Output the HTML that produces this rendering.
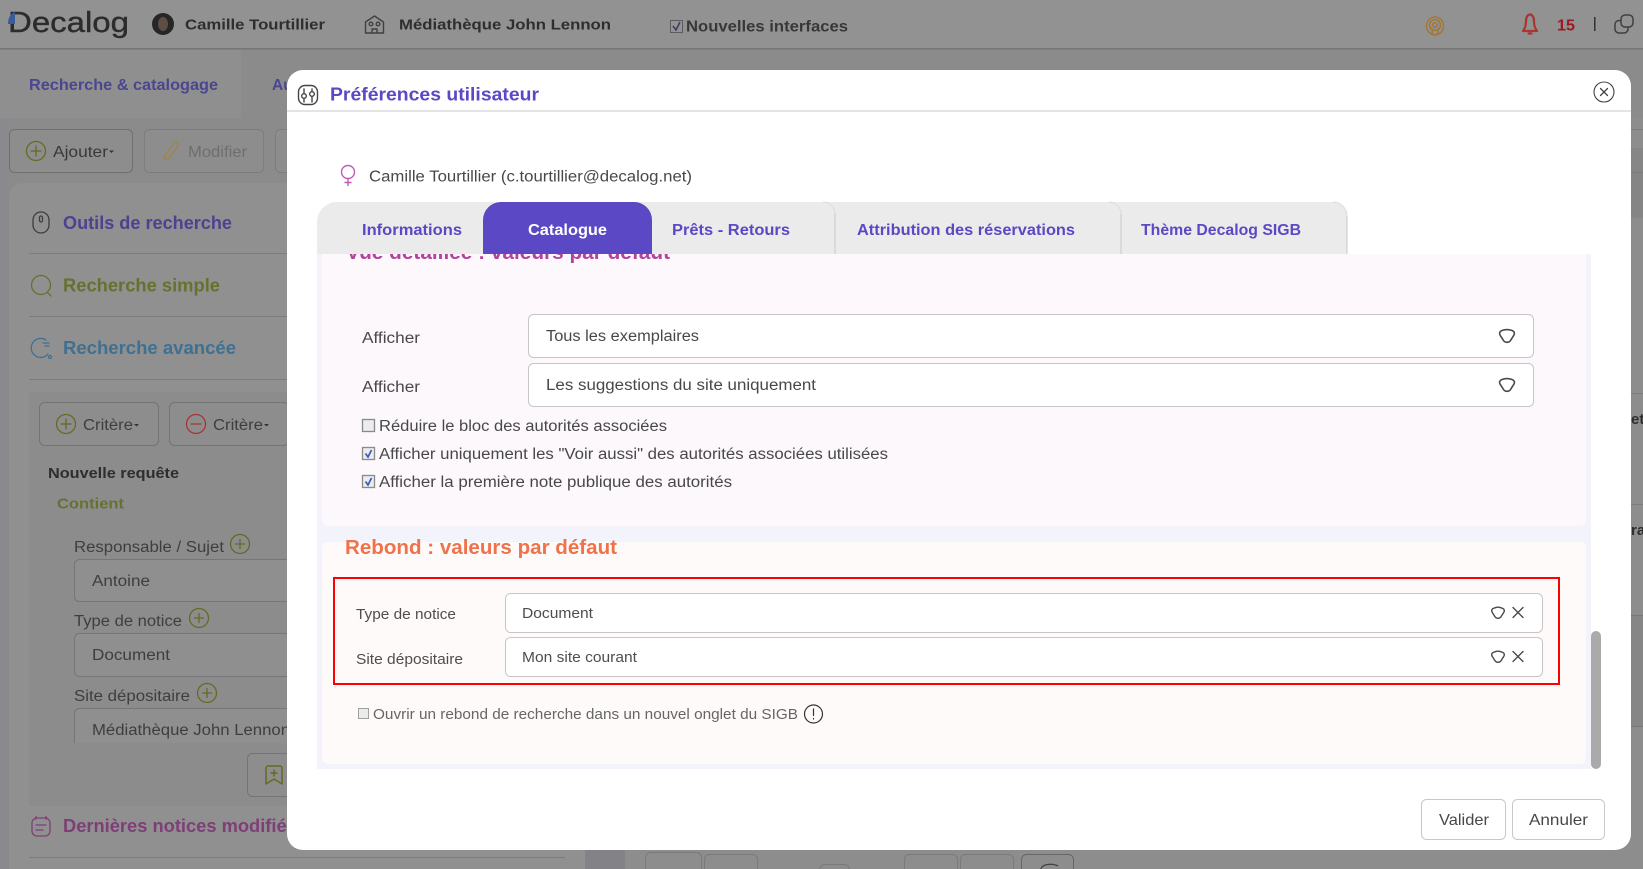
<!DOCTYPE html>
<html lang="fr">
<head>
<meta charset="utf-8">
<title>Préférences utilisateur</title>
<style>
html,body{margin:0;padding:0;width:1643px;height:869px;overflow:hidden;background:#8b8b8b}
svg{display:block}
text{font-family:"Liberation Sans",sans-serif;white-space:pre}
.b{font-weight:700}
.ic{fill:none;stroke-linecap:round;stroke-linejoin:round}
</style>
</head>
<body>
<svg xmlns="http://www.w3.org/2000/svg" width="1643" height="869" viewBox="0 0 1643 869">
<defs>
<clipPath id="cp1"><rect x="317" y="254" width="1274" height="515"/></clipPath>
<clipPath id="cp2"><rect x="29" y="392" width="258" height="351"/></clipPath>
</defs>

<!-- Background (dimmed application) -->
<g id="app">
<rect width="1643" height="869" fill="#8b8b8b"/>
<rect width="1643" height="48" fill="#929292"/>
<rect y="48" width="1643" height="1.5" fill="#767676"/>
<rect x="0" y="50" width="241" height="68" fill="#8f8f8f"/>
<rect x="0" y="118" width="9" height="751" fill="#8a8a8e"/>

<text x="8" y="32" font-size="29" fill="#2c2c2c" stroke="#2c2c2c" stroke-width=".4" textLength="121" lengthAdjust="spacingAndGlyphs">Decalog</text>
<path d="M8 24 C8 18 10 14 15 12 L15 24Z" fill="#3a5c9c"/>
<circle cx="163" cy="24" r="11" fill="#262626"/><ellipse cx="163" cy="24" rx="5" ry="7" fill="#5f4e46"/>
<text x="185" y="29.500" font-size="15" class="b" fill="#2e2e2e" textLength="140" lengthAdjust="spacingAndGlyphs">Camille Tourtillier</text>
<g class="ic" stroke="#404040" stroke-width="1.400"><path d="M365.500 33V22L374.500 16L383.500 22V33Z"/><circle cx="371" cy="24" r="1.800"/><circle cx="378" cy="24" r="1.800"/><path d="M372 33V29H377V33"/></g>
<text x="399" y="29.500" font-size="15" class="b" fill="#2e2e2e" textLength="212" lengthAdjust="spacingAndGlyphs">Médiathèque John Lennon</text>
<rect x="670.500" y="20.500" width="12" height="12" fill="#949494" stroke="#5c5c5c"/><path d="M673 26L676 30L680 22" fill="none" stroke="#3a3a6a" stroke-width="1.500"/>
<text x="686" y="31.500" font-size="15.500" class="b" fill="#383838" textLength="162" lengthAdjust="spacingAndGlyphs">Nouvelles interfaces</text>

<g class="ic" stroke="#a87424" stroke-width="1.300"><ellipse cx="1435" cy="26" rx="8.500" ry="9"/><circle cx="1435" cy="25" r="5.500"/><circle cx="1435" cy="25" r="2.300"/><rect x="1432" y="30" width="6" height="5" rx="2.500" fill="#929292"/></g>
<g class="ic" stroke="#a83630" stroke-width="2.200"><path d="M1523 31C1525.500 28 1526 25 1526 21C1526 17 1528 14.500 1530 14.500C1532 14.500 1534 17 1534 21C1534 25 1534.500 28 1537 31Z"/><path d="M1528.500 33.500H1531.500"/></g>
<text x="1557" y="30.500" font-size="15.500" class="b" fill="#9c1823" textLength="18" lengthAdjust="spacingAndGlyphs">15</text>
<rect x="1594" y="17" width="1.500" height="14" fill="#333"/>
<g class="ic" stroke="#404040" stroke-width="1.500"><rect x="1615" y="20.500" width="13" height="12.500" rx="4"/><rect x="1621" y="15" width="12" height="12" rx="4" fill="#929292"/></g>

<text x="29" y="90" font-size="15.500" class="b" fill="#4a4690" textLength="189" lengthAdjust="spacingAndGlyphs">Recherche &amp; catalogage</text>
<text x="272" y="90" font-size="15.500" class="b" fill="#4a4690">Au</text>

<!-- toolbar -->
<rect x="9.500" y="129.500" width="123" height="43" rx="5" fill="#8d8d8d" stroke="#6f6f6f"/>
<g class="ic" stroke="#666a22" stroke-width="1.300"><circle cx="36" cy="151" r="9.500"/><path d="M36 146V156M31 151H41"/></g>
<text x="53" y="157" font-size="16" fill="#383838" textLength="55" lengthAdjust="spacingAndGlyphs">Ajouter</text>
<path d="M109 150.500h5l-2.500 2.500z" fill="#333"/>
<rect x="144.500" y="129.500" width="119" height="43" rx="5" fill="#8d8d8d" stroke="#7d7d7d"/>
<g class="ic" stroke="#9c8450" stroke-width="1.400"><path d="M164 157L174 143C176 141 179 143 178 146L169 158C167 160 163 159 164 157Z"/></g>
<text x="188" y="157" font-size="16" fill="#6e6e6e" textLength="59" lengthAdjust="spacingAndGlyphs">Modifier</text>
<rect x="275.500" y="129.500" width="40" height="43" rx="5" fill="#8d8d8d" stroke="#7d7d7d"/>

<!-- sidebar -->
<rect x="9" y="183" width="576" height="700" rx="14" fill="#909090"/>
<rect x="29" y="392" width="540" height="414" fill="#8c8c8d"/>
<rect x="29" y="253" width="540" height="1" fill="#7c7c7c"/>
<rect x="29" y="316" width="540" height="1" fill="#7c7c7c"/>
<rect x="29" y="379" width="540" height="1" fill="#7c7c7c"/>
<rect x="29" y="857" width="536" height="1" fill="#7c7c7c"/>

<g class="ic" stroke="#3e3e3e" stroke-width="1.300"><rect x="33" y="212" width="16" height="21" rx="8"/><rect x="39.500" y="216" width="3" height="6" rx="1.500"/></g>
<text x="63" y="229" font-size="18" class="b" fill="#4c4290" textLength="169" lengthAdjust="spacingAndGlyphs">Outils de recherche</text>
<g class="ic" stroke="#65722f" stroke-width="1.300"><circle cx="41" cy="285" r="9.500"/><path d="M48 293L51 296"/></g>
<text x="63" y="291.500" font-size="18" class="b" fill="#65722f" textLength="157" lengthAdjust="spacingAndGlyphs">Recherche simple</text>
<g class="ic" stroke="#3f7092" stroke-width="1.300"><path d="M46 340A9.500 9.500 0 1 0 48 354"/><path d="M43 343H49M45 346H49"/><circle cx="50" cy="357" r="1.500"/></g>
<text x="63" y="354" font-size="18" class="b" fill="#3f7092" textLength="173" lengthAdjust="spacingAndGlyphs">Recherche avancée</text>

<rect x="39.500" y="402.500" width="119" height="43" rx="5" fill="#8d8d8d" stroke="#747474"/>
<g class="ic" stroke="#666a22" stroke-width="1.300"><circle cx="66" cy="424" r="9.500"/><path d="M66 419V429M61 424H71"/></g>
<text x="83" y="430" font-size="15.500" fill="#3e3e3e" textLength="50" lengthAdjust="spacingAndGlyphs">Critère</text>
<path d="M134 424h5l-2.500 2.500z" fill="#333"/>
<rect x="169.500" y="402.500" width="119" height="43" rx="5" fill="#8d8d8d" stroke="#747474"/>
<g class="ic" stroke="#a83630" stroke-width="1.300"><circle cx="196" cy="424" r="9.500"/><path d="M191 424H201"/></g>
<text x="213" y="430" font-size="15.500" fill="#3e3e3e" textLength="50" lengthAdjust="spacingAndGlyphs">Critère</text>
<path d="M264 424h5l-2.500 2.500z" fill="#333"/>

<text x="48" y="478" font-size="15" class="b" fill="#2e2e2e" textLength="131" lengthAdjust="spacingAndGlyphs">Nouvelle requête</text>
<text x="57" y="508.500" font-size="15" class="b" fill="#65722f" textLength="67" lengthAdjust="spacingAndGlyphs">Contient</text>

<g clip-path="url(#cp2)">
<text x="74" y="552" font-size="15.500" fill="#3e3e3e" textLength="150" lengthAdjust="spacingAndGlyphs">Responsable / Sujet</text>
<rect x="74.500" y="559.500" width="300" height="42" rx="5" fill="#8f8f8f" stroke="#767676"/>
<text x="92" y="586" font-size="15.500" fill="#3e3e3e" textLength="58" lengthAdjust="spacingAndGlyphs">Antoine</text>
<text x="74" y="626" font-size="15.500" fill="#3e3e3e" textLength="108" lengthAdjust="spacingAndGlyphs">Type de notice</text>
<rect x="74.500" y="633.500" width="300" height="43" rx="5" fill="#8f8f8f" stroke="#767676"/>
<text x="92" y="660" font-size="15.500" fill="#3e3e3e" textLength="78" lengthAdjust="spacingAndGlyphs">Document</text>
<text x="74" y="701" font-size="15.500" fill="#3e3e3e" textLength="116" lengthAdjust="spacingAndGlyphs">Site dépositaire</text>
<rect x="74.500" y="708.500" width="300" height="60" rx="5" fill="#8f8f8f" stroke="#767676"/>
<text x="92" y="735" font-size="15.500" fill="#3e3e3e" textLength="198" lengthAdjust="spacingAndGlyphs">Médiathèque John Lennon</text>
</g>
<g class="ic" stroke="#666a22" stroke-width="1.300"><circle cx="240" cy="544" r="9.500"/><path d="M240 539.500V548.500M235.500 544H244.500"/><circle cx="199" cy="618" r="9.500"/><path d="M199 613.500V622.500M194.500 618H203.500"/><circle cx="207" cy="693" r="9.500"/><path d="M207 688.500V697.500M202.500 693H211.500"/></g>

<rect x="247.500" y="753.500" width="80" height="43" rx="5" fill="#8d8d8d" stroke="#747474"/>
<g class="ic" stroke="#666a22" stroke-width="1.500"><path d="M268 766H280C281 766 282 767 282 768V784L274 779L266 784V768C266 767 267 766 268 766Z"/><path d="M274 770V776M271 773H277"/></g>

<g class="ic" stroke="#7d3f76" stroke-width="1.300"><rect x="32" y="818" width="18" height="18" rx="5"/><path d="M36 825H46M36 830H43M36 816.500V819M46 816.500V819"/></g>
<text x="63" y="832" font-size="18" class="b" fill="#7d3f76" textLength="244" lengthAdjust="spacingAndGlyphs">Dernières notices modifiées</text>

<!-- right column -->
<rect x="625" y="118" width="1018" height="751" fill="#8d8d8d"/>
<rect x="585" y="850" width="40" height="19" fill="#838387"/>
<rect x="1631" y="129" width="12" height="1" fill="#7c7c7c"/>
<rect x="1631" y="148" width="12" height="24" fill="#868686"/>
<rect x="1631" y="172" width="12" height="1" fill="#7c7c7c"/>
<rect x="1631" y="173" width="12" height="45" fill="#858585"/>
<rect x="1631" y="393" width="12" height="1" fill="#7c7c7c"/>
<rect x="1631" y="504" width="12" height="1" fill="#7c7c7c"/>
<rect x="1631" y="615" width="12" height="111" fill="#868686"/>
<rect x="1631" y="615" width="12" height="1" fill="#777"/>
<rect x="1631" y="726" width="12" height="1" fill="#777"/>
<text x="1631" y="424" font-size="15" class="b" fill="#2e2e2e">et</text>
<text x="1631" y="535" font-size="15" class="b" fill="#2e2e2e">ra</text>
<rect x="500" y="857" width="65" height="1" fill="#7c7c7c"/>
<g fill="none" stroke="#7a7a7a">
<rect x="645.500" y="852.500" width="56" height="30" rx="5"/>
<rect x="704.500" y="854.500" width="53" height="30" rx="5"/>
<rect x="819.500" y="864.500" width="30" height="20" rx="5"/>
<rect x="904.500" y="854.500" width="53" height="30" rx="5"/>
<rect x="960.500" y="854.500" width="53" height="30" rx="5"/>
<rect x="1021.500" y="854.500" width="52" height="30" rx="5" stroke="#666"/>
</g>
<path d="M1041 869C1042 864 1052 863 1058 866" fill="none" stroke="#404040" stroke-width="1.300"/>
</g>

<!-- Modal -->
<g id="modal">
<rect x="287" y="70" width="1344" height="780" rx="16" fill="#fff"/>
<rect x="287" y="110.500" width="1344" height="1" fill="#c8c8c8"/>
<g class="ic" stroke="#444" stroke-width="1.400"><rect x="298.500" y="85.500" width="19" height="19" rx="6.500"/><path d="M304 89V93M304 99V102M312 89V91M312 97V102"/><circle cx="304" cy="96" r="2.300"/><circle cx="312" cy="94" r="2.300"/></g>
<text x="330" y="100.500" font-size="18" class="b" fill="#5a48c4" textLength="209" lengthAdjust="spacingAndGlyphs">Préférences utilisateur</text>
<g class="ic" stroke="#444" stroke-width="1.100"><circle cx="1604" cy="92" r="10"/><path d="M1600.500 88.500L1607.500 95.500M1607.500 88.500L1600.500 95.500" stroke-width="1.300"/></g>

<g class="ic" stroke="#bd5cb9" stroke-width="1.400"><circle cx="348" cy="172" r="6.500"/><path d="M348 178.500V185.500M345 182.500H351"/></g>
<text x="369" y="181.500" font-size="15.500" fill="#484848" textLength="323" lengthAdjust="spacingAndGlyphs">Camille Tourtillier (c.tourtillier@decalog.net)</text>

<!-- scroll content -->
<rect x="317" y="254" width="1274" height="515" fill="#f3f3fb"/>
<path d="M322 254H1586V520a6 6 0 0 1-6 6H328a6 6 0 0 1-6-6Z" fill="#fcf8fc"/>
<rect x="322" y="542" width="1264" height="222" rx="6" fill="#fefaf9"/>
<g clip-path="url(#cp1)"><text x="346" y="259" font-size="20" class="b" fill="#b5439d" textLength="324" lengthAdjust="spacingAndGlyphs">Vue détaillée : valeurs par défaut</text></g>

<text x="362" y="343" font-size="15.500" fill="#484848" textLength="58" lengthAdjust="spacingAndGlyphs">Afficher</text>
<rect x="528.500" y="314.500" width="1005" height="43" rx="5" fill="#fff" stroke="#c8c4c8"/>
<text x="546" y="341" font-size="15.500" fill="#484848" textLength="153" lengthAdjust="spacingAndGlyphs">Tous les exemplaires</text>
<path d="M1502 330.500C1505 329.400 1509 329.400 1512 330.500C1514.500 331.400 1515 333.300 1513.800 335.300L1510.300 340.800C1508.800 342.800 1505.200 342.800 1503.700 340.800L1500.200 335.300C1499 333.300 1499.500 331.400 1502 330.500Z" fill="none" stroke="#4a4a4a" stroke-width="1.600"/>
<text x="362" y="392" font-size="15.500" fill="#484848" textLength="58" lengthAdjust="spacingAndGlyphs">Afficher</text>
<rect x="528.500" y="363.500" width="1005" height="43" rx="5" fill="#fff" stroke="#c8c4c8"/>
<text x="546" y="390" font-size="15.500" fill="#484848" textLength="270" lengthAdjust="spacingAndGlyphs">Les suggestions du site uniquement</text>
<path d="M1502 379.500C1505 378.400 1509 378.400 1512 379.500C1514.500 380.400 1515 382.300 1513.800 384.300L1510.300 389.800C1508.800 391.800 1505.200 391.800 1503.700 389.800L1500.200 384.300C1499 382.300 1499.500 380.400 1502 379.500Z" fill="none" stroke="#4a4a4a" stroke-width="1.600"/>

<rect x="362.500" y="419.500" width="12" height="12" fill="#ececec" stroke="#8a8a8a" stroke-width="1.300"/>
<text x="379" y="431" font-size="15.500" fill="#484848" textLength="288" lengthAdjust="spacingAndGlyphs">Réduire le bloc des autorités associées</text>
<rect x="362.500" y="447.500" width="12" height="12" fill="#ececec" stroke="#8a8a8a" stroke-width="1.300"/>
<path d="M365.500 453.500L368 457L371.500 450" fill="none" stroke="#3a58c0" stroke-width="1.700"/>
<text x="379" y="459" font-size="15.500" fill="#484848" textLength="509" lengthAdjust="spacingAndGlyphs">Afficher uniquement les "Voir aussi" des autorités associées utilisées</text>
<rect x="362.500" y="475.500" width="12" height="12" fill="#ececec" stroke="#8a8a8a" stroke-width="1.300"/>
<path d="M365.500 481.500L368 485L371.500 478" fill="none" stroke="#3a58c0" stroke-width="1.700"/>
<text x="379" y="487" font-size="15.500" fill="#484848" textLength="353" lengthAdjust="spacingAndGlyphs">Afficher la première note publique des autorités</text>

<text x="345" y="554" font-size="20" class="b" fill="#f0724a" textLength="272" lengthAdjust="spacingAndGlyphs">Rebond : valeurs par défaut</text>

<text x="356" y="619" font-size="14.500" fill="#4e4e4e" textLength="100" lengthAdjust="spacingAndGlyphs">Type de notice</text>
<rect x="505.500" y="593.500" width="1037" height="39" rx="5" fill="#fff" stroke="#c8c4c8"/>
<text x="522" y="618" font-size="14.500" fill="#4e4e4e" textLength="71" lengthAdjust="spacingAndGlyphs">Document</text>
<text x="356" y="664" font-size="14.500" fill="#4e4e4e" textLength="107" lengthAdjust="spacingAndGlyphs">Site dépositaire</text>
<rect x="505.500" y="637.500" width="1037" height="39" rx="5" fill="#fff" stroke="#c8c4c8"/>
<text x="522" y="662" font-size="14.500" fill="#4e4e4e" textLength="115" lengthAdjust="spacingAndGlyphs">Mon site courant</text>
<g class="ic" stroke="#4a4a4a" stroke-width="1.400">
<path d="M1495 607.800C1497 607 1499 607 1501 607.800C1504 608.500 1504.800 610 1504 612L1501 616.800C1499.700 618.800 1496.300 618.800 1495 616.800L1492 612C1491.200 610 1492 608.500 1495 607.800Z"/>
<path d="M1513 607.500L1523 617.500M1523 607.500L1513 617.500"/>
<path d="M1495 651.800C1497 651 1499 651 1501 651.800C1504 652.500 1504.800 654 1504 656L1501 660.800C1499.700 662.800 1496.300 662.800 1495 660.800L1492 656C1491.200 654 1492 652.500 1495 651.800Z"/>
<path d="M1513 651.500L1523 661.500M1523 651.500L1513 661.500"/>
</g>
<rect x="334" y="578" width="1225" height="106" fill="none" stroke="#f00" stroke-width="2"/>

<rect x="358.500" y="708.500" width="10" height="10" fill="#ececec" stroke="#a0a0a0"/>
<text x="373" y="719" font-size="14.500" fill="#666" textLength="425" lengthAdjust="spacingAndGlyphs">Ouvrir un rebond de recherche dans un nouvel onglet du SIGB</text>
<g class="ic" stroke="#333" stroke-width="1.200"><circle cx="813.500" cy="714" r="9"/><path d="M813.500 709V715.500M813.500 718.500V719"/></g>

<rect x="1591" y="631" width="10" height="138" rx="5" fill="#aaa"/>

<!-- tabs -->
<path d="M317 254V222a20 20 0 0 1 20-20H1333a14 14 0 0 1 14 14V254Z" fill="#ebebeb"/>
<path d="M823 202a12 12 0 0 1 12 12M1109 202a12 12 0 0 1 12 12M1333 202a14 14 0 0 1 14 14" fill="none" stroke="#dcdcdc"/>
<path d="M835 214V254M1121 214V254M1347 216V254" fill="none" stroke="#c8c8c8"/>
<path d="M483 254V220a18 18 0 0 1 18-18H634a18 18 0 0 1 18 18V254Z" fill="#5b48c4"/>
<text x="362" y="235" font-size="16" class="b" fill="#5a48c4" textLength="100" lengthAdjust="spacingAndGlyphs">Informations</text>
<text x="528" y="235" font-size="16" class="b" fill="#fff" textLength="79" lengthAdjust="spacingAndGlyphs">Catalogue</text>
<text x="672" y="235" font-size="16" class="b" fill="#5a48c4" textLength="118" lengthAdjust="spacingAndGlyphs">Prêts - Retours</text>
<text x="857" y="235" font-size="16" class="b" fill="#5a48c4" textLength="218" lengthAdjust="spacingAndGlyphs">Attribution des réservations</text>
<text x="1141" y="235" font-size="16" class="b" fill="#5a48c4" textLength="160" lengthAdjust="spacingAndGlyphs">Thème Decalog SIGB</text>

<!-- footer buttons -->
<rect x="1421.500" y="799.500" width="84" height="40" rx="5" fill="#fff" stroke="#c8c8c8"/>
<text x="1439" y="825" font-size="16" fill="#484848" textLength="50" lengthAdjust="spacingAndGlyphs">Valider</text>
<rect x="1512.500" y="799.500" width="92" height="40" rx="5" fill="#fff" stroke="#c8c8c8"/>
<text x="1529" y="825" font-size="16" fill="#484848" textLength="59" lengthAdjust="spacingAndGlyphs">Annuler</text>
</g>
</svg>
</body>
</html>
